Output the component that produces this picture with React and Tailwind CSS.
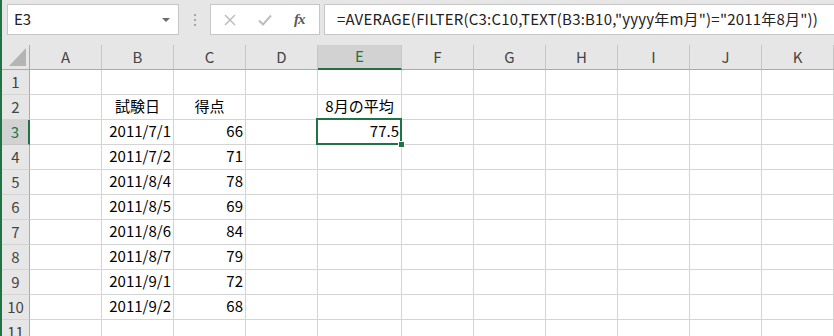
import React from "react";

const GREEN = "#217346";

const cols = ["A", "B", "C", "D", "E", "F", "G", "H", "I", "J", "K"];

const scores = [
  ["2011/7/1", "66"],
  ["2011/7/2", "71"],
  ["2011/8/4", "78"],
  ["2011/8/5", "69"],
  ["2011/8/6", "84"],
  ["2011/8/7", "79"],
  ["2011/9/1", "72"],
  ["2011/9/2", "68"],
];

// what goes in each cell, keyed by row -> column
const cells = { 2: { B: ["試験日", "c"], C: ["得点", "c"], E: ["8月の平均", "c"] } };
scores.forEach(([d, s], i) => {
  cells[i + 3] = { B: [d, "r"], C: [s, "r"] };
});
cells[3].E = ["77.5", "r"];

const FormulaBar = () => (
  <div className="h-[45px] bg-[#e6e6e6] flex items-start pt-[4px] shrink-0">
    <div className="ml-[5px] w-[172px] h-[31px] bg-white border border-[#c6c6c6] flex items-center">
      <span className="ml-[6px] text-[15px] text-[#222] flex-1">E3</span>
      <svg width="8" height="4" className="mr-[8px]">
        <polygon points="0,0 8,0 4,4" fill="#6b6b6b" />
      </svg>
    </div>
    <div className="w-[31px] h-[31px] flex flex-col items-center justify-center gap-[3px]">
      <div className="w-[2px] h-[2px] bg-[#a6a6a6]" />
      <div className="w-[2px] h-[2px] bg-[#a6a6a6]" />
      <div className="w-[2px] h-[2px] bg-[#a6a6a6]" />
    </div>
    <div className="w-[110px] h-[31px] bg-white border border-[#c6c6c6] flex items-center">
      <svg width="12" height="12" className="ml-[13px]">
        <path d="M1 1 L11 11 M11 1 L1 11" stroke="#bdbdbd" strokeWidth="1.5" fill="none" />
      </svg>
      <svg width="14" height="12" className="ml-[22px]">
        <path d="M1 6.5 L5 10.5 L13 1.5" stroke="#bdbdbd" strokeWidth="2" fill="none" />
      </svg>
      <span className="ml-[22px] text-[15px] italic font-bold text-[#5a5a5a] font-['Liberation_Serif',serif] tracking-[-1px]">
        fx
      </span>
    </div>
    <div className="ml-[4px] flex-1 h-[31px] bg-white border border-[#c6c6c6] border-r-0 flex items-center">
      <span className="ml-[12px] text-[15px] text-[#222] whitespace-nowrap tracking-[0.2px]">
        =AVERAGE(FILTER(C3:C10,TEXT(B3:B10,"yyyy年m月")="2011年8月"))
      </span>
    </div>
  </div>
);

const HeaderRow = () => (
  <div className="flex h-[25px] shrink-0">
    <div className="w-[28px] h-[25px] border-r border-b border-[#ababab] bg-[#e6e6e6] relative">
      <svg width="27" height="24" className="absolute left-0 top-0">
        <polygon points="24,3 24,21 7,21" fill="#b4b4b4" />
      </svg>
    </div>
    {cols.map((c) =>
      c === "E" ? (
        <div
          key={c}
          className="w-[84px] h-[25px] bg-[#d2d2d2] border-r border-[#c6c6c6] border-b-2 border-b-[#217346] flex items-center justify-center text-[15px] text-[#217346]"
        >
          {c}
        </div>
      ) : (
        <div
          key={c}
          className="w-[72px] h-[25px] bg-[#e6e6e6] border-r border-[#c6c6c6] border-b border-b-[#ababab] flex items-center justify-center text-[15px] text-[#444]"
        >
          {c}
        </div>
      )
    )}
  </div>
);

const Row = ({ n }) => {
  const data = cells[n] || {};
  const active = n === 3;
  return (
    <div className={"flex h-[25px] shrink-0" + (active ? " relative z-10" : "")}>
      <div
        className={
          active
            ? "w-[28px] h-[25px] bg-[#d2d2d2] border-r-2 border-r-[#217346] border-b border-b-[#c6c6c6] flex items-center justify-center text-[15px] text-[#217346]"
            : "w-[28px] h-[25px] bg-[#e6e6e6] border-r border-r-[#ababab] border-b border-b-[#d4d4d4] flex items-center justify-center text-[15px] text-[#444]"
        }
      >
        {n}
      </div>
      {cols.map((c) => {
        const v = data[c];
        const sel = active && c === "E";
        return (
          <div
            key={c}
            className={
              (c === "E" ? "w-[84px] " : "w-[72px] ") +
              "h-[25px] border-r border-b border-[#d4d4d4] flex items-end pb-[3px] px-[2px] relative " +
              (v && v[1] === "c" ? "justify-center" : "justify-end")
            }
          >
            {v && <span className="text-[15px] leading-[20px] text-black whitespace-nowrap">{v[0]}</span>}
            {sel && (
              <>
                <div className="absolute -left-[2px] -top-[2px] -right-[1px] -bottom-[1px] border-2 border-[#217346] z-10" />
                <div className="absolute -right-[4px] -bottom-[4px] w-[7px] h-[7px] bg-[#217346] border border-white z-20" />
              </>
            )}
          </div>
        );
      })}
    </div>
  );
};

export default function App() {
  return (
    <div className="w-[834px] h-[336px] overflow-hidden flex bg-white font-['Noto_Sans_CJK_JP',sans-serif]">
      <div className="w-[2px] shrink-0" style={{ background: GREEN }} />
      <div className="flex-1 flex flex-col overflow-hidden">
        <FormulaBar />
        <HeaderRow />
        {[1, 2, 3, 4, 5, 6, 7, 8, 9, 10, 11].map((n) => (
          <Row key={n} n={n} />
        ))}
      </div>
    </div>
  );
}
